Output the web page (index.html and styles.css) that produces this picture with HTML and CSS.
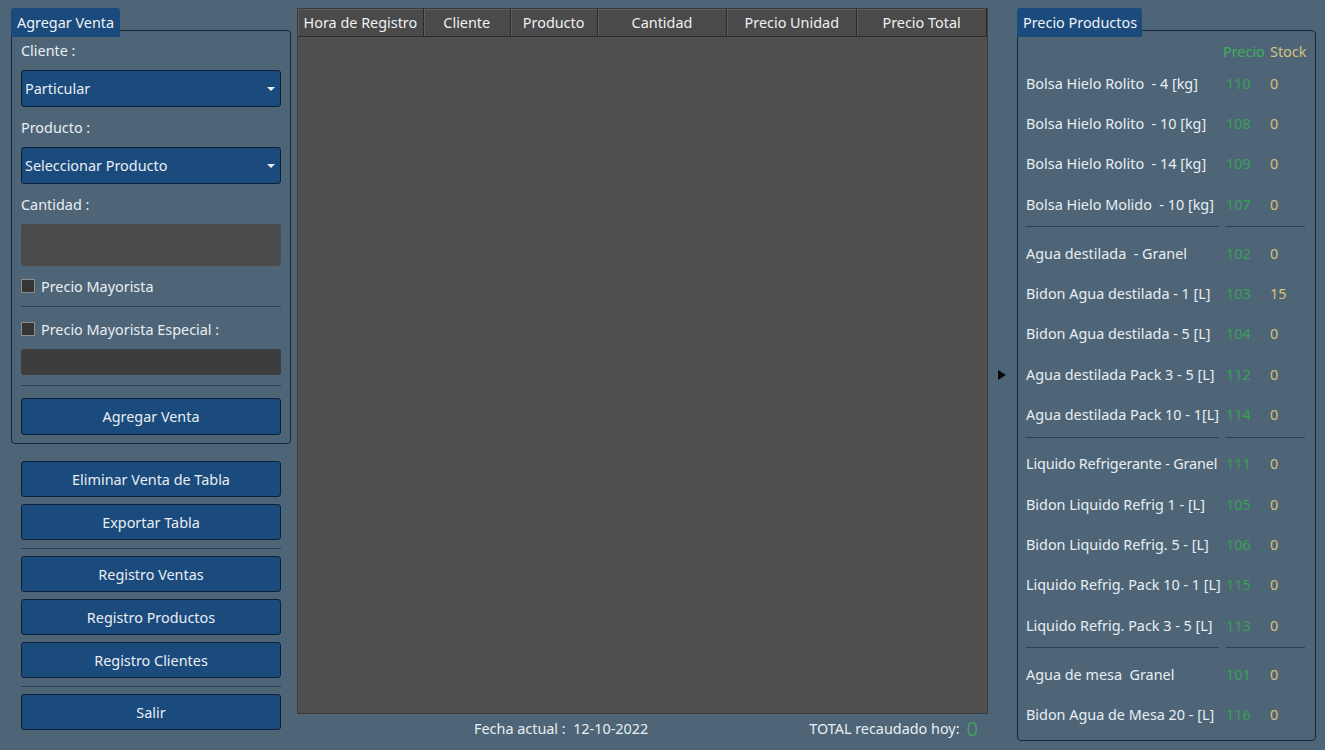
FILE: index.html
```html
<!DOCTYPE html>
<html lang="es">
<head>
<meta charset="utf-8">
<title>Ventas</title>
<link rel="stylesheet" href="styles.css">
</head>
<body>
<div class="app">
  <aside class="left">
    <div class="group">
      <div class="tab">Agregar Venta</div>
      <div class="box box-venta">
        <div class="label lbl-cliente">Cliente :</div>
        <div class="combo combo-1"><span>Particular</span><i class="caret"></i></div>
        <div class="label lbl-gap">Producto :</div>
        <div class="combo"><span>Seleccionar Producto</span><i class="caret"></i></div>
        <div class="label lbl-gap">Cantidad :</div>
        <div class="input input-big"></div>
        <label class="check check-1"><span class="cb"></span>Precio Mayorista</label>
        <div class="sep sep-1"></div>
        <label class="check check-2"><span class="cb"></span>Precio Mayorista Especial :</label>
        <div class="input input-small"></div>
        <div class="sep sep-2"></div>
        <button class="btn btn-add">Agregar Venta</button>
      </div>
    </div>
    <div class="actions">
      <button class="btn">Eliminar Venta de Tabla</button>
      <button class="btn">Exportar Tabla</button>
      <div class="sep sep-act"></div>
      <button class="btn">Registro Ventas</button>
      <button class="btn">Registro Productos</button>
      <button class="btn">Registro Clientes</button>
      <div class="sep sep-act"></div>
      <button class="btn">Salir</button>
    </div>
  </aside>

  <main class="center">
    <div class="table">
      <div class="thead">
        <div class="th w1">Hora de Registro</div>
        <div class="th w2">Cliente</div>
        <div class="th w3">Producto</div>
        <div class="th w4">Cantidad</div>
        <div class="th w5">Precio Unidad</div>
        <div class="th w6">Precio Total</div>
      </div>
      <div class="tbody"></div>
    </div>
    <div class="footer">
      <span class="fecha">Fecha actual :&nbsp; 12-10-2022</span>
      <span class="total">TOTAL recaudado hoy: <b class="total-val">0</b></span>
    </div>
  </main>

  <div class="toggle"><i class="arrow"></i></div>

  <aside class="right">
    <div class="group group-right">
      <div class="tab">Precio Productos</div>
      <div class="box box-precios">
        <div class="prow phead"><span></span><span class="hp">Precio</span><span class="hs">Stock</span></div>
        <div class="prow"><span>Bolsa Hielo Rolito&nbsp; - 4 [kg]</span><span class="p">110</span><span class="s">0</span></div>
        <div class="prow"><span>Bolsa Hielo Rolito&nbsp; - 10 [kg]</span><span class="p">108</span><span class="s">0</span></div>
        <div class="prow"><span>Bolsa Hielo Rolito&nbsp; - 14 [kg]</span><span class="p">109</span><span class="s">0</span></div>
        <div class="prow"><span>Bolsa Hielo Molido&nbsp; - 10 [kg]</span><span class="p">107</span><span class="s">0</span></div>
        <div class="psep"><i></i><i></i></div>
        <div class="prow"><span>Agua destilada&nbsp; - Granel</span><span class="p">102</span><span class="s">0</span></div>
        <div class="prow"><span>Bidon Agua destilada - 1 [L]</span><span class="p">103</span><span class="s">15</span></div>
        <div class="prow"><span>Bidon Agua destilada - 5 [L]</span><span class="p">104</span><span class="s">0</span></div>
        <div class="prow"><span>Agua destilada Pack 3 - 5 [L]</span><span class="p">112</span><span class="s">0</span></div>
        <div class="prow"><span>Agua destilada Pack 10 - 1[L]</span><span class="p">114</span><span class="s">0</span></div>
        <div class="psep"><i></i><i></i></div>
        <div class="prow"><span class="tight">Liquido Refrigerante - Granel</span><span class="p">111</span><span class="s">0</span></div>
        <div class="prow"><span>Bidon Liquido Refrig 1 - [L]</span><span class="p">105</span><span class="s">0</span></div>
        <div class="prow"><span>Bidon Liquido Refrig. 5 - [L]</span><span class="p">106</span><span class="s">0</span></div>
        <div class="prow"><span>Liquido Refrig. Pack 10 - 1 [L]</span><span class="p">115</span><span class="s">0</span></div>
        <div class="prow"><span>Liquido Refrig. Pack 3 - 5 [L]</span><span class="p">113</span><span class="s">0</span></div>
        <div class="psep"><i></i><i></i></div>
        <div class="prow"><span>Agua de mesa&nbsp; Granel</span><span class="p">101</span><span class="s">0</span></div>
        <div class="prow"><span>Bidon Agua de Mesa 20 - [L]</span><span class="p">116</span><span class="s">0</span></div>
      </div>
    </div>
  </aside>
</div>
</body>
</html>
```

FILE: styles.css
```css
* { box-sizing: border-box; }
html, body { margin: 0; padding: 0; }
body {
  background: #4e6577;
  color: #e8eef3;
  font-family: "Noto Sans", "Open Sans", sans-serif;
  font-size: 14.4px;
  width: 1325px;
  height: 750px;
  overflow: hidden;
}
.app {
  display: flex;
  height: 750px;
  padding: 8px 9px 0 11px;
}

/* ---------- left ---------- */
.left { width: 280px; flex: none; display: flex; flex-direction: column; }
.group { display: flex; flex-direction: column; }
.tab {
  position: relative;
  z-index: 1;
  align-self: flex-start;
  height: 29px;
  padding: 0 6px;
  background: #1b4a7c;
  border-radius: 3px 3px 0 0;
  line-height: 29px;
  margin-bottom: -7px;
  color: #eef3f8;
  white-space: nowrap;
}
.left .tab { width: 109px; }
.box {
  border: 1px solid #14263b;
  border-radius: 4px;
  display: flex;
  flex-direction: column;
}
.box-venta { height: 414px; padding: 11px 9px 0 9px; }
.label { height: 18px; line-height: 18px; }
.lbl-gap { margin-top: 12px; }
.combo {
  margin-top: 10px;
  height: 37px;
  background: #1b4a7c;
  border: 1px solid #0e2036;
  border-radius: 3px;
  display: flex;
  align-items: center;
  padding: 0 0 0 3px;
  position: relative;
}
.combo-1 { margin-top: 10px; }
.caret {
  position: absolute;
  right: 5px;
  top: 16px;
  width: 0; height: 0;
  border-left: 4px solid transparent;
  border-right: 4px solid transparent;
  border-top: 4px solid #e8eef3;
}
.input { background: #4b4b4b; border-radius: 3px; margin-top: 10px; }
.input-big { height: 42px; }
.input-small { height: 26px; background: #3d3d3d; margin-top: 11px; }
.check { display: flex; align-items: center; height: 18px; }
.check-1 { margin-top: 11px; }
.check-2 { margin-top: 13px; }
.cb {
  width: 14px; height: 14px;
  background: #353535;
  border: 1px solid #8c8c8c;
  margin-right: 6px;
  flex: none;
}
.sep { height: 1px; background: #2c4053; }
.sep-1 { margin-top: 11px; }
.sep-2 { margin-top: 10px; }
.btn {
  font: inherit;
  color: #e8eef3;
  background: #1b4a7c;
  border: 1px solid #0e2036;
  border-radius: 3px;
  height: 36px;
  width: 100%;
  padding: 0;
  text-align: center;
}
.btn-add { margin-top: 12px; height: 37px; }

.actions {
  margin-top: 17px;
  padding: 0 10px;
  display: flex;
  flex-direction: column;
  gap: 7px;
}
.sep-act { margin: 1px 0 0; }

/* ---------- center ---------- */
.center {
  width: 691px;
  flex: none;
  margin-left: 6px;
  display: flex;
  flex-direction: column;
}
.table {
  height: 706px;
  background: #505050;
  border: 1px solid #3a3a3a;
  display: flex;
  flex-direction: column;
}
.thead { display: flex; height: 28px; flex: none; }
.th {
  height: 28px;
  line-height: 28px;
  text-align: center;
  background: #4a4a4a;
  border-right: 1px solid #2a2a2a;
  border-bottom: 1px solid #2a2a2a;
  box-shadow: inset 1px 1px 0 #5e5e5e;
  color: #eef0f2;
  white-space: nowrap;
  overflow: hidden;
}
.w1 { width: 126px; }
.w2 { width: 87px; }
.w3 { width: 87px; }
.w4 { width: 130px; }
.w5 { width: 130px; }
.w6 { width: 130px; }
.tbody { flex: 1; }
.footer {
  display: flex;
  align-items: center;
  height: 28px;
  padding-left: 177px;
  padding-right: 10px;
}
.fecha { white-space: nowrap; }
.total { margin-left: auto; display: flex; align-items: center; white-space: nowrap; }
.total-val {
  font-weight: 300;
  font-size: 20px;
  color: #3fae5a;
  margin-left: 7px;
}

/* ---------- toggle ---------- */
.toggle {
  width: 29px;
  flex: none;
  display: flex;
  align-items: center;
  justify-content: center;
  padding-bottom: 8px;
}
.arrow {
  width: 0; height: 0;
  border-top: 5px solid transparent;
  border-bottom: 5px solid transparent;
  border-left: 8px solid #0a0a0a;
  margin-left: -2px;
}

/* ---------- right ---------- */
.right { width: 299px; flex: none; }
.right .tab { width: 125px; }
.box-precios { height: 711px; padding: 10px 9px 0 8px; }
.prow {
  display: grid;
  grid-template-columns: 200px 44px 1fr;
  height: 40.3px;
  align-items: center;
  white-space: nowrap;
}
.tight { letter-spacing: -0.15px; }
.phead { height: 20px; margin-bottom: 2px; }
.phead .hp { color: #3fae5a; margin-left: -3px; }
.phead .hs { color: #d8c07a; }
.p { color: #3aa055; }
.s { color: #d8c07a; }
.psep {
  display: grid;
  grid-template-columns: 193px 79px;
  column-gap: 7px;
  margin: 2px 0 6px;
}
.psep i { height: 1px; background: #2c4053; display: block; }
```
